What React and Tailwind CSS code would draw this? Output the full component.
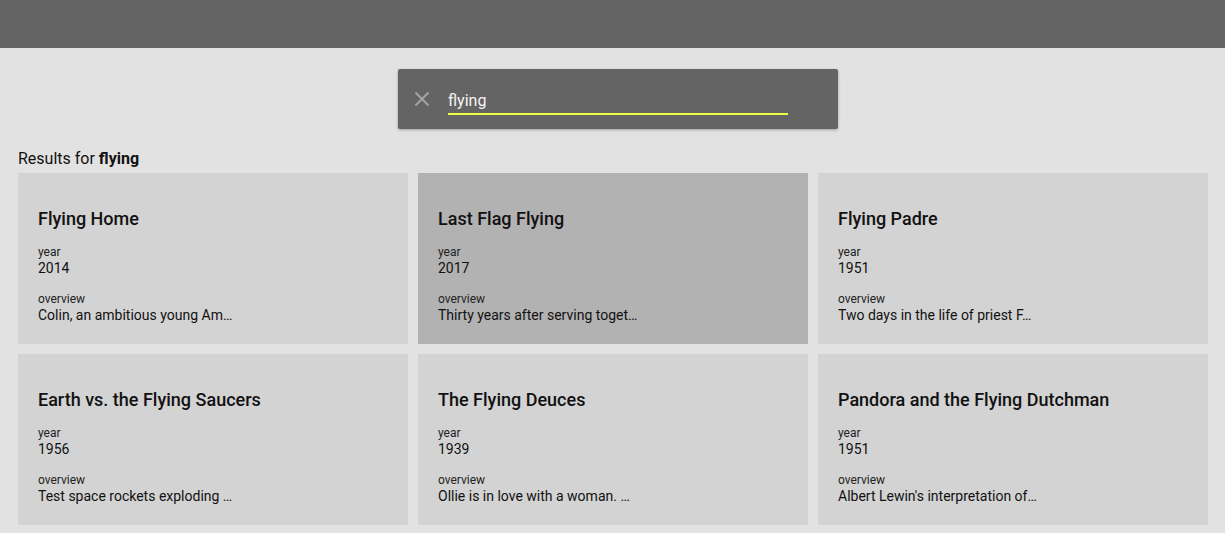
import { useState } from 'react'

const movies = [
  { title: 'Flying Home', year: 2014, overview: 'Colin, an ambitious young Am…' },
  { title: 'Last Flag Flying', year: 2017, overview: 'Thirty years after serving toget…' },
  { title: 'Flying Padre', year: 1951, overview: 'Two days in the life of priest F…' },
  { title: 'Earth vs. the Flying Saucers', year: 1956, overview: 'Test space rockets exploding …' },
  { title: 'The Flying Deuces', year: 1939, overview: 'Ollie is in love with a woman. …' },
  { title: 'Pandora and the Flying Dutchman', year: 1951, overview: "Albert Lewin's interpretation of…" },
]

function MovieCard({ movie, active }) {
  return (
    <div className={`h-[171px] pl-5 pr-5 pt-[34px] ${active ? 'bg-[#b2b2b2]' : 'bg-[#d3d3d3]'}`}>
      <div className="text-[18px] leading-[24px] font-medium text-[#111]">{movie.title}</div>
      <div className="mt-[13px] text-[12px] leading-[16px] text-[#222]">year</div>
      <div className="text-[14px] leading-[16px] text-[#111]">{movie.year}</div>
      <div className="mt-[15px] text-[12px] leading-[16px] text-[#222]">overview</div>
      <div className="text-[14px] leading-[16px] text-[#111]">{movie.overview}</div>
    </div>
  )
}

export default function App() {
  const [query, setQuery] = useState('flying')

  return (
    <div className="min-h-[533px] bg-[#e2e2e2] font-['Roboto',sans-serif]">
      <div className="h-12 bg-[#646464]" />

      <div className="flex justify-center pt-[21px] pl-[11px]">
        <div className="flex h-[60px] w-[440px] items-center rounded-[2px] bg-[#646464] shadow-[0_1px_3px_rgba(0,0,0,0.3)]">
          <button type="button" onClick={() => setQuery('')} className="ml-3 text-[#a3a3a3]">
            <svg width="24" height="24" viewBox="0 0 24 24" fill="none" stroke="currentColor" strokeWidth="2">
              <path d="M5.5 5.5l13 13M18.5 5.5l-13 13" />
            </svg>
          </button>
          <div className="ml-[14px] w-[340px] border-b-2 border-[#eeff41] pt-[5px]">
            <input
              value={query}
              onChange={(e) => setQuery(e.target.value)}
              className="w-full bg-transparent text-[16px] leading-[20px] text-[#f5f5f5] outline-none pb-[1px]"
            />
          </div>
        </div>
      </div>

      <div className="mt-[20px] pl-[18px] pr-[17px] text-[16px] leading-[20px] text-[#111]">
        Results for <span className="font-bold">{query}</span>
      </div>

      <div className="mt-1 grid grid-cols-3 gap-[10px] pl-[18px] pr-[17px] pb-2">
        {movies.map((m, i) => (
          <MovieCard key={m.title} movie={m} active={i === 1} />
        ))}
      </div>
    </div>
  )
}
